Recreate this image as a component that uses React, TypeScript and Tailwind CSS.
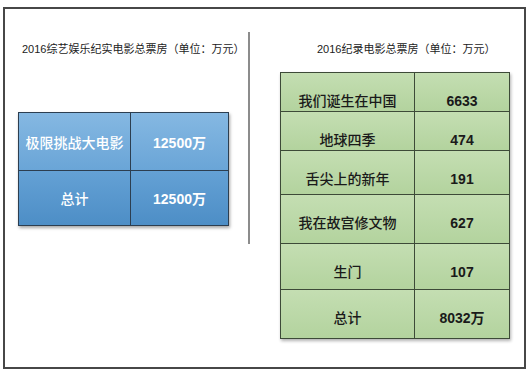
import React from "react";

const font = { fontFamily: '"Liberation Sans", "Noto Sans CJK SC", sans-serif' };

const greenRows: [string, string, number][] = [
  ["我们诞生在中国", "6633", 39],
  ["地球四季", "474", 39],
  ["舌尖上的新年", "191", 44],
  ["我在故宫修文物", "627", 49],
  ["生门", "107", 46],
  ["总计", "8032万", 49],
];

export default function App() {
  return (
    <div className="w-[530px] h-[374px] bg-white overflow-hidden" style={font}>
      <div className="ml-[3px] mt-[7px] w-[523px] h-[362px] border-2 border-[#474747] flex">
        {/* left column */}
        <div className="w-[243px] flex flex-col">
          <div className="mt-[32px] pl-[17px] text-[11px] leading-[16px] text-[#222] whitespace-nowrap">
            2016综艺娱乐纪实电影总票房（单位：万元）
          </div>
          <div className="mt-[55px] ml-[13px] w-[211px] border border-[#2c3e50] shadow-[1px_2px_3px_rgba(0,0,0,0.35)] text-white text-[14px]">
            <div className="flex h-[57px] bg-gradient-to-b from-[#85b8e2] to-[#6aa5d7]">
              <div className="w-[112px] border-r border-[#2c3e50] flex items-center justify-center pt-[4px] font-medium">极限挑战大电影</div>
              <div className="flex-1 flex items-center justify-center pt-[4px] font-semibold">12500万</div>
            </div>
            <div className="flex h-[55px] border-t border-[#2c3e50] bg-gradient-to-b from-[#64a1d5] to-[#4d8ec6]">
              <div className="w-[112px] border-r border-[#2c3e50] flex items-center justify-center pt-[2px] font-medium">总计</div>
              <div className="flex-1 flex items-center justify-center pt-[2px] font-semibold">12500万</div>
            </div>
          </div>
        </div>
        {/* divider */}
        <div className="w-[2px] h-[212px] mt-[23px] bg-[#8c8c8c]" />
        {/* right column */}
        <div className="flex-1 flex flex-col">
          <div className="mt-[32px] pl-[67px] text-[11px] leading-[16px] text-[#222] whitespace-nowrap">
            2016纪录电影总票房（单位：万元）
          </div>
          <div className="mt-[15px] ml-[30px] w-[230px] border border-[#3d4a38] shadow-[1px_2px_3px_rgba(0,0,0,0.3)] text-[#1a1a1a] text-[14px]">
            {greenRows.map(([name, val, h], i) => (
              <div
                key={i}
                className={`flex bg-gradient-to-b from-[#c4deb2] to-[#b3d39e] ${i > 0 ? "border-t border-[#3d4a38]" : ""}`}
                style={{ height: (i === 0 ? h - 1 : h) + "px" }}
              >
                <div className="w-[134px] border-r border-[#3d4a38] flex justify-center pt-[20px] leading-[17px] font-medium">{name}</div>
                <div className="flex-1 flex justify-center pt-[20px] leading-[17px] font-semibold">{val}</div>
              </div>
            ))}
          </div>
        </div>
      </div>
    </div>
  );
}
